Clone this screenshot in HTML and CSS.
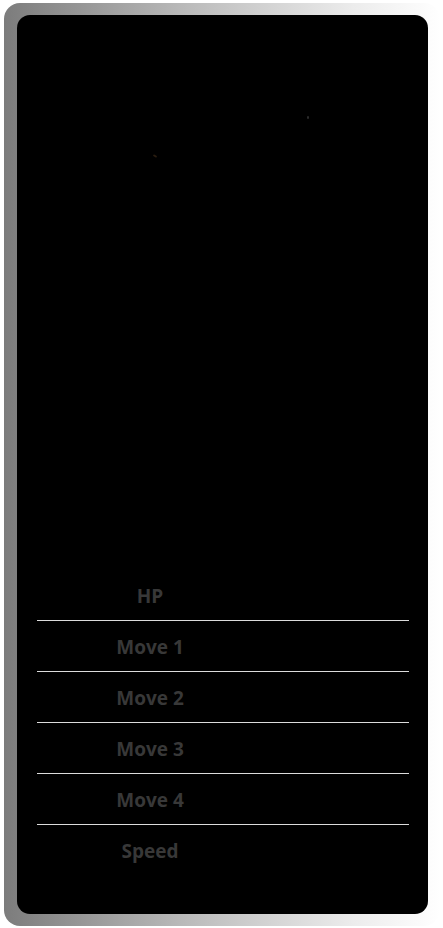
FILE: index.html
```html
<!DOCTYPE html>
<html>
<head>
<meta charset="utf-8">
<link rel="stylesheet" href="styles.css">
</head>
<body>
<div class="card">
  <div class="screen">
    <span class="spark spark-a"></span>
    <span class="spark spark-b"></span>
    <div class="stats">
      <div class="row"><span class="label">HP</span></div>
      <div class="row"><span class="label">Move 1</span></div>
      <div class="row"><span class="label">Move 2</span></div>
      <div class="row"><span class="label">Move 3</span></div>
      <div class="row"><span class="label">Move 4</span></div>
      <div class="row"><span class="label">Speed</span></div>
    </div>
  </div>
</div>
</body>
</html>
```
FILE: styles.css
```css
html, body {
  margin: 0;
  padding: 0;
  background: #ffffff;
}
body {
  padding: 3px 3px 2px 4px;
  font-family: "Open Sans", "Noto Sans", sans-serif;
}
.card {
  height: 899px;
  padding: 12px 12px 12px 13px;
  border-radius: 16px;
  background: linear-gradient(90deg, #7c7c7c 0%, #b8b8b8 40%, #ececec 80%, #ffffff 100%);
}
.screen {
  position: relative;
  height: 100%;
  background: #000000;
  border-radius: 13px;
  display: flex;
  flex-direction: column;
  justify-content: flex-end;
  padding: 0 19px 39px 20px;
  box-sizing: border-box;
}
.spark {
  position: absolute;
  width: 2px;
  height: 2px;
  border-radius: 1px;
}
.spark-a {
  left: 290px;
  top: 101px;
  background: #2a2a2a;
  height: 3px;
}
.spark-b {
  left: 136px;
  top: 140px;
  width: 4px;
  background: #2a1d10;
  transform: rotate(30deg);
}
.stats {
  display: flex;
  flex-direction: column;
}
.row {
  height: 50px;
  border-bottom: 1px solid #dcdcdc;
  display: flex;
  align-items: center;
}
.row:last-child {
  border-bottom: none;
}
.label {
  width: 226px;
  padding-top: 2px;
  text-align: center;
  font-size: 19px;
  font-weight: 700;
  color: #383838;
}
```
